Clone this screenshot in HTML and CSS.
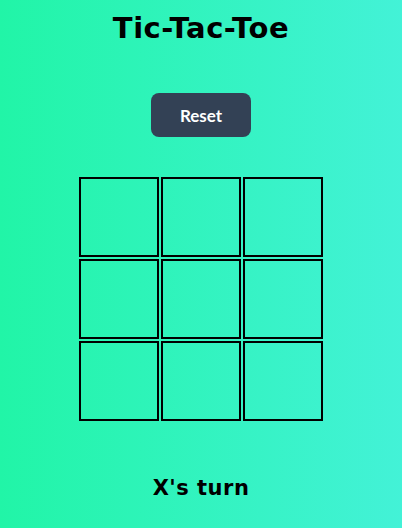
FILE: index.html
```html
<!DOCTYPE html>
<html>
<head>
<meta charset="utf-8">
<meta name="viewport" content="initial-scale=1.0, width=device-width">
<title>Tic-Tac-Toe</title>
<link rel="stylesheet" href="styles.css">
</head>
<body>

<div class="game">
  <h1>Tic-Tac-Toe</h1>

  <button type="button" class="reset">Reset</button>

  <div class="board">
    <div class="cell"></div>
    <div class="cell"></div>
    <div class="cell"></div>
    <div class="cell"></div>
    <div class="cell"></div>
    <div class="cell"></div>
    <div class="cell"></div>
    <div class="cell"></div>
    <div class="cell"></div>
  </div>

  <p class="status">X's turn</p>
</div>

</body>
</html>
```

FILE: styles.css
```css
html,body,div,h1,p{margin:0;padding:0;}
*{box-sizing:border-box;}
html,body{height:100%;}
body{
  color:#000;
  font-family:"DejaVu Sans",Verdana,sans-serif;
  background:linear-gradient(to right,#21f5a7,#43f2d7);
}
.game{
  display:flex;
  flex-direction:column;
  align-items:center;
}
h1{
  font-size:29px;
  font-weight:bold;
  letter-spacing:0.5px;
  margin-top:11px;
  line-height:34px;
}
.reset{
  margin-top:48px;
  width:100px;
  height:44px;
  border:none;
  border-radius:8px;
  background:#334155;
  color:#fff;
  font-family:Lato,sans-serif;
  font-weight:bold;
  font-size:17px;
}
.board{
  margin-top:40px;
  display:grid;
  grid-template-columns:repeat(3,80px);
  grid-template-rows:repeat(3,80px);
  gap:2px;
}
.cell{
  border:2px solid #000;
}
.status{
  margin-top:53px;
  font-size:21px;
  font-weight:bold;
  letter-spacing:0.5px;
  line-height:28px;
}
```
